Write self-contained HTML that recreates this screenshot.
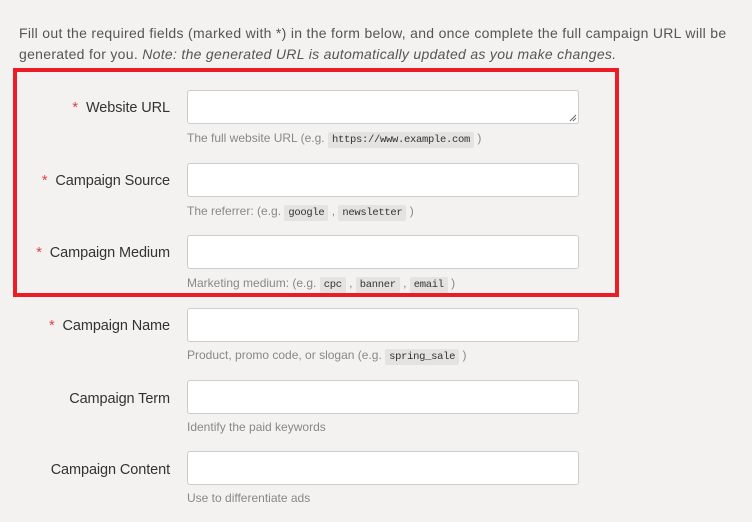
<!DOCTYPE html>
<html><head><style>
body{margin:0;width:752px;height:522px;background:#f3f2f1;font-family:"Liberation Sans",sans-serif;color:#333;position:relative;overflow:hidden}
.intro{position:absolute;left:19px;font-size:14px;line-height:21px;color:#555;letter-spacing:0.3px;white-space:nowrap}
.box{position:absolute;left:13px;top:68px;width:598px;height:221px;border:4px solid #ec1c24}
.lbl{position:absolute;right:582px;font-size:14.5px;color:#333;white-space:nowrap;letter-spacing:-0.1px}
.lbl b{color:#e04040;font-weight:normal;margin-right:8px}
.in{position:absolute;left:187px;width:390px;height:32px;background:#fff;border:1px solid #ccc;border-radius:3px}
.help{position:absolute;left:187px;font-size:12px;color:#888;white-space:nowrap;letter-spacing:0px}
code{font-family:"Liberation Mono",monospace;font-size:10.5px;color:#333;background:#e4e3e2;padding:2px 4px;border-radius:2px;letter-spacing:-0.3px}
</style></head><body>
<div class="intro" style="top:23px">Fill out the required fields (marked with *) in the form below, and once complete the full campaign URL will be</div>
<div class="intro" style="top:44px">generated for you. <i>Note: the generated URL is automatically updated as you make changes.</i></div>
<div class="box"></div>
<div class="lbl" style="top:100px"><b>*</b>Website URL</div>
<div class="in" style="top:90px"><svg style="position:absolute;right:1px;bottom:1px" width="8" height="8"><path d="M7 1L1 7M7 4L4 7" stroke="#666" stroke-width="1"/></svg></div>
<div class="help" style="top:131px">The full website URL (e.g. <code>https://www.example.com</code> )</div>
<div class="lbl" style="top:173px"><b>*</b>Campaign Source</div>
<div class="in" style="top:163px"></div>
<div class="help" style="top:204px">The referrer: (e.g. <code>google</code> , <code>newsletter</code> )</div>
<div class="lbl" style="top:245px"><b>*</b>Campaign Medium</div>
<div class="in" style="top:235px"></div>
<div class="help" style="top:276px">Marketing medium: (e.g. <code>cpc</code> , <code>banner</code> , <code>email</code> )</div>
<div class="lbl" style="top:318px"><b>*</b>Campaign Name</div>
<div class="in" style="top:308px"></div>
<div class="help" style="top:348px">Product, promo code, or slogan (e.g. <code>spring_sale</code> )</div>
<div class="lbl" style="top:391px">Campaign Term</div>
<div class="in" style="top:380px"></div>
<div class="help" style="top:420px">Identify the paid keywords</div>
<div class="lbl" style="top:462px">Campaign Content</div>
<div class="in" style="top:451px"></div>
<div class="help" style="top:491px">Use to differentiate ads</div>
</body></html>
